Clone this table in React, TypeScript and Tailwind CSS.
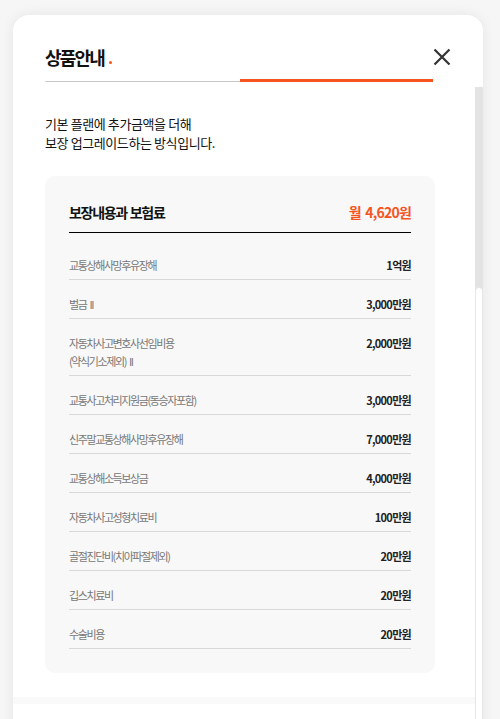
import React from "react";

const rows: { label: string[]; value: string }[] = [
  { label: ["교통상해사망후유장해"], value: "1억원" },
  { label: ["벌금 II"], value: "3,000만원" },
  { label: ["자동차사고변호사선임비용", "(약식기소제외) II"], value: "2,000만원" },
  { label: ["교통사고처리지원금(동승자포함)"], value: "3,000만원" },
  { label: ["신주말교통상해사망후유장해"], value: "7,000만원" },
  { label: ["교통상해소득보상금"], value: "4,000만원" },
  { label: ["자동차사고성형치료비"], value: "100만원" },
  { label: ["골절진단비(치아파절제외)"], value: "20만원" },
  { label: ["깁스치료비"], value: "20만원" },
  { label: ["수술비용"], value: "20만원" },
];

export default function App() {
  return (
    <div
      className="h-[719px] overflow-hidden bg-[#f6f6f6] pt-[15px] pl-[13px]"
      style={{ fontFamily: '"Noto Sans CJK KR", "Noto Sans", sans-serif' }}
    >
      <div className="w-[470px] h-[760px] bg-white rounded-t-[16px] shadow-[0_0_14px_rgba(0,0,0,0.07)] flex flex-col">
        <div className="pl-[32px] pr-[32px] pt-[30px] flex items-center justify-between">
          <div className="flex items-end h-[24px]">
            <span className="text-[18px] leading-[24px] font-bold tracking-[-1.8px] text-[#111]">상품안내</span>
            <span className="ml-[5px] mb-[5px] w-[3px] h-[3px] rounded-full bg-[#f5541e]" />
          </div>
          <svg width="18" height="18" viewBox="0 0 18 18">
            <path d="M1.5 1.5 L16.5 16.5 M16.5 1.5 L1.5 16.5" stroke="#333" strokeWidth="2.2" fill="none" />
          </svg>
        </div>
        <div className="ml-[32px] mt-[10px] w-[388px] flex h-[3px]">
          <div className="w-[195px] flex flex-col justify-end">
            <div className="h-[1px] bg-[#c8c8c8] rounded-bl" />
          </div>
          <div className="flex-1 bg-[#f5541e]" />
        </div>
        <div className="mt-[5px] flex flex-1">
          <div className="w-[462px] pl-[32px] pt-[27px]">
            <p className="text-[13px] leading-[19px] tracking-[-0.4px] text-[#111]">
              기본 플랜에 추가금액을 더해
              <br />
              보장 업그레이드하는 방식입니다.
            </p>
            <div className="mt-[24px] w-[390px] rounded-[10px] bg-[#f8f8f8] px-[24px] pb-[24px]">
              <div className="pt-[26px] pb-[10px] flex justify-between leading-[20px] border-b border-black">
                <span className="text-[14px] font-bold tracking-[-1.3px] [word-spacing:1px] text-[#111]">보장내용과 보험료</span>
                <span className="text-[14px] font-bold tracking-[-0.8px] [word-spacing:2px] text-[#f5541e]">월 4,620원</span>
              </div>
              <ul className="mt-[8px]">
                {rows.map((r, i) => (
                  <li
                    key={i}
                    className="pt-[15px] pb-[5px] flex justify-between border-b border-[#d8d8d8] text-[11px] leading-[18px]"
                  >
                    <div className="text-[#777] tracking-[-1.4px] [word-spacing:2px]">
                      {r.label.map((l, j) => (
                        <div key={j}>{l}</div>
                      ))}
                    </div>
                    <div className="text-[#222] font-bold tracking-[-0.7px]">{r.value}</div>
                  </li>
                ))}
              </ul>
            </div>
            <div className="mt-[24px] -ml-[32px] w-[462px] h-[7px] bg-[#f9f9f9]" />
          </div>
          <div className="w-[8px] bg-[#e3e3e3] flex flex-col">
            <div className="h-[200px]" />
            <div className="flex-1 bg-white rounded-t-[4px] border-x border-t border-[#e6e6e6]" />
          </div>
        </div>
      </div>
    </div>
  );
}
